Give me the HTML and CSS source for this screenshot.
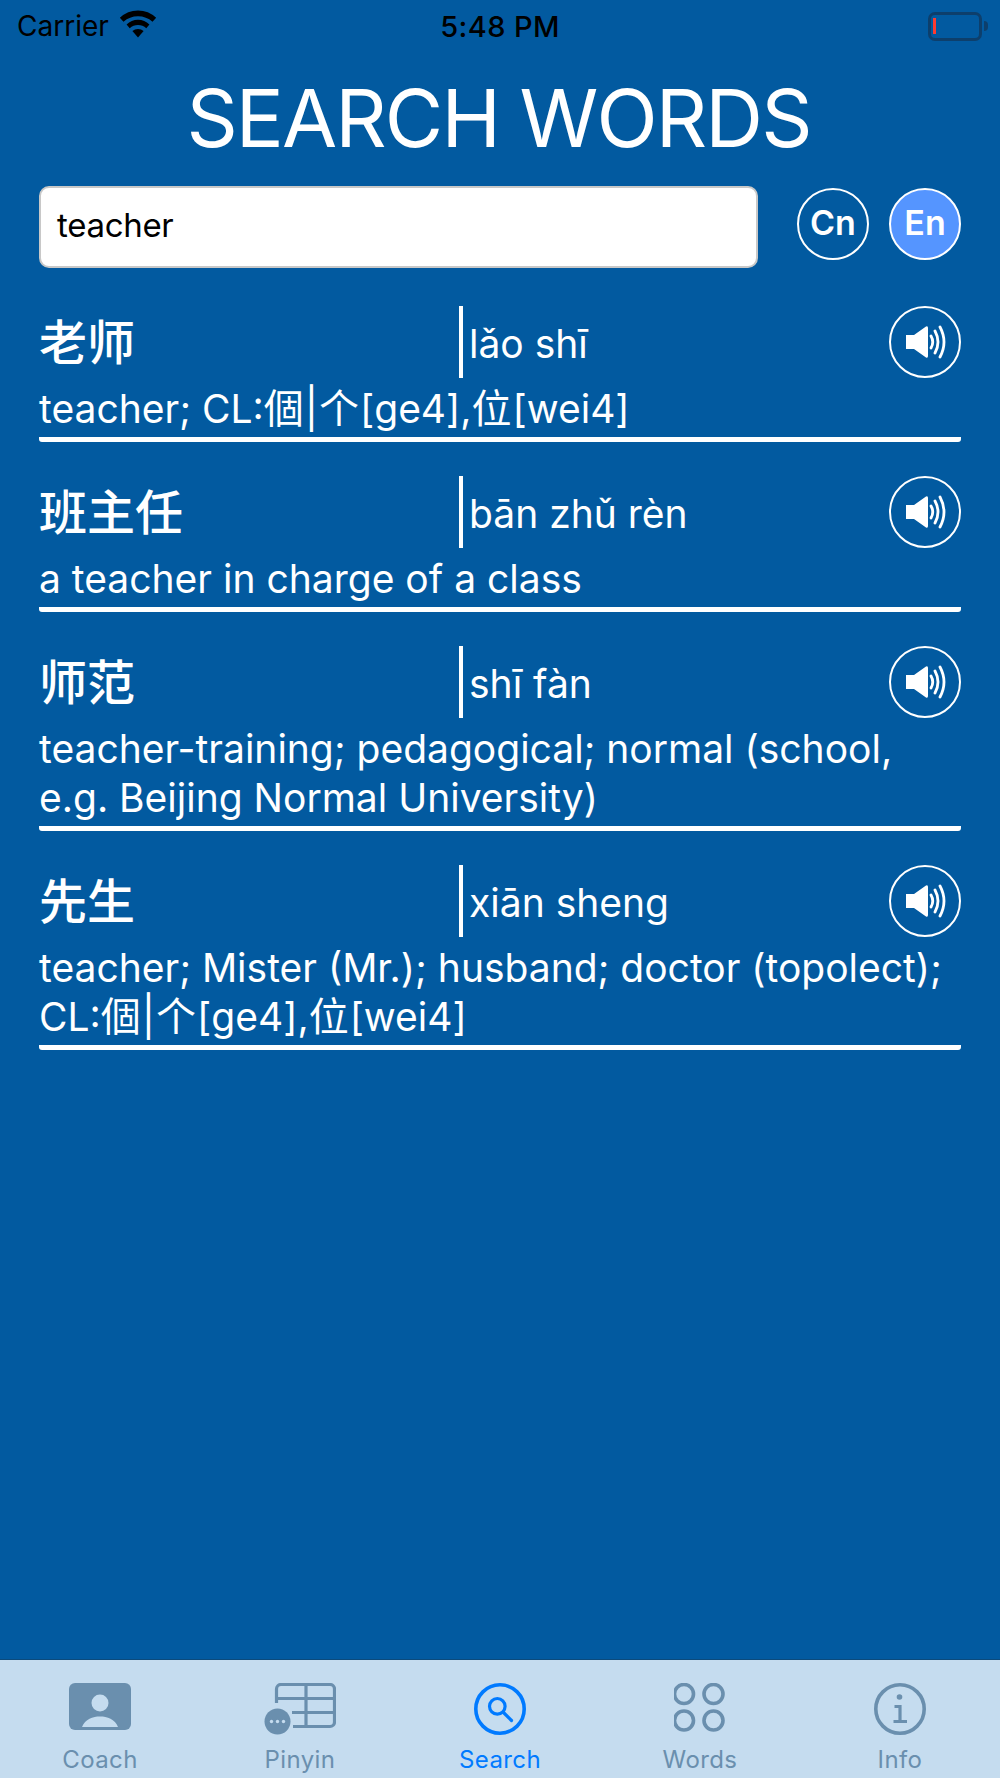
FILE: index.html
```html
<!doctype html>
<html>
<head>
    <title>Search Words</title>
    <meta charset="utf-8">
    <link rel="stylesheet" href="styles.css">
</head>
<body>
    <div id="page">
        <div class="status">
            <div class="status-left">
                <span>Carrier</span>
                <svg class="wifi" width="38" height="28" viewBox="0 0 36 27">
                    <path d="M18 26.500 L12.600 20.300 A8 8 0 0 1 23.400 20.300 Z"/>
                    <path d="M18 9.500 A16 16 0 0 1 29 14 L26 17.600 A12 12 0 0 0 10 17.600 L7 14 A16 16 0 0 1 18 9.500 Z"/>
                    <path d="M18 0.500 A26 26 0 0 1 35.500 7.500 L32 11.300 A21 21 0 0 0 4 11.300 L0.500 7.500 A26 26 0 0 1 18 0.500 Z"/>
                </svg>
            </div>
            <div class="status-time">5:48 PM</div>
            <div class="status-right">
                <div class="battery"><div class="battery-level"></div></div>
                <div class="battery-tip"></div>
            </div>
        </div>

        <h1 class="title">SEARCH WORDS</h1>

        <div class="search">
            <div class="search-input">teacher</div>
            <div class="lang-btn">Cn</div>
            <div class="lang-btn active">En</div>
        </div>

        <div class="results">
            <div class="word">
                <div class="word-head">
                    <div class="hanzi">老师</div>
                    <div class="pinyin">lǎo shī</div>
                    <div class="sound">
                        <svg width="44" height="46" viewBox="0 0 44 46"><use href="#speaker"/></svg>
                    </div>
                </div>
                <div class="meaning">teacher; CL:<span class="cn">個|个</span>[ge4],<span class="cn">位</span>[wei4]</div>
            </div>
            <div class="word">
                <div class="word-head">
                    <div class="hanzi">班主任</div>
                    <div class="pinyin">bān zhǔ rèn</div>
                    <div class="sound">
                        <svg width="44" height="46" viewBox="0 0 44 46"><use href="#speaker"/></svg>
                    </div>
                </div>
                <div class="meaning">a teacher in charge of a class</div>
            </div>
            <div class="word">
                <div class="word-head">
                    <div class="hanzi">师范</div>
                    <div class="pinyin">shī fàn</div>
                    <div class="sound">
                        <svg width="44" height="46" viewBox="0 0 44 46"><use href="#speaker"/></svg>
                    </div>
                </div>
                <div class="meaning">teacher-training; pedagogical; normal (school, e.g. Beijing Normal University)</div>
            </div>
            <div class="word">
                <div class="word-head">
                    <div class="hanzi">先生</div>
                    <div class="pinyin">xiān sheng</div>
                    <div class="sound">
                        <svg width="44" height="46" viewBox="0 0 44 46"><use href="#speaker"/></svg>
                    </div>
                </div>
                <div class="meaning">teacher; Mister (Mr.); husband; doctor (topolect);<br>CL:<span class="cn">個|个</span>[ge4],<span class="cn">位</span>[wei4]</div>
            </div>
        </div>

        <div class="tabs">
            <div class="tab">
                <svg width="62" height="52" viewBox="0 0 62 52">
                    <path d="M6 0 H56 A6 6 0 0 1 62 6 V41 A6 6 0 0 1 56 47 H6 A6 6 0 0 1 0 41 V6 A6 6 0 0 1 6 0 Z"/>
                    <circle cx="31" cy="20" r="8.500" class="cut"/>
                    <path d="M13 44 C16 36 24 33.500 31 33.500 C38 33.500 46 36 49 44 Z" class="cut"/>
                </svg>
                <span>Coach</span>
            </div>
            <div class="tab">
                <svg width="72" height="52" viewBox="0 0 72 52">
                    <path d="M12.500 20 V6 A4.500 4.500 0 0 1 17 1.500 H66 A4.500 4.500 0 0 1 70.500 6 V39 A4.500 4.500 0 0 1 66 43.500 H29 M12.500 15.500 H70 M28 29.500 H70 M42 2 V43" class="line thin"/>
                    <circle cx="13.500" cy="38.500" r="13"/>
                    <circle cx="7.500" cy="38.500" r="1.700" class="cut"/>
                    <circle cx="13.500" cy="38.500" r="1.700" class="cut"/>
                    <circle cx="19.500" cy="38.500" r="1.700" class="cut"/>
                </svg>
                <span>Pinyin</span>
            </div>
            <div class="tab selected">
                <svg width="52" height="52" viewBox="0 0 52 52">
                    <circle cx="26" cy="26" r="24.200" class="line"/>
                    <circle cx="23.300" cy="23.300" r="7.800" class="line thin"/>
                    <path d="M29.500 29.500 L37.500 37.500" class="line thin round"/>
                </svg>
                <span>Search</span>
            </div>
            <div class="tab">
                <svg width="52" height="52" viewBox="0 0 52 52">
                    <circle cx="10" cy="11" r="9.500" class="line"/>
                    <circle cx="39.500" cy="11" r="9.500" class="line"/>
                    <circle cx="10" cy="37.500" r="9.500" class="line"/>
                    <circle cx="39.500" cy="37.500" r="9.500" class="line"/>
                </svg>
                <span>Words</span>
            </div>
            <div class="tab">
                <svg width="52" height="52" viewBox="0 0 52 52">
                    <circle cx="26" cy="26" r="24.200" class="line"/>
                    <circle cx="25.500" cy="14" r="2.800"/>
                    <path d="M20.500 23.500 H26 V38 M19.500 38.500 H33" class="line thin"/>
                </svg>
                <span>Info</span>
            </div>
        </div>
    </div>

    <svg width="0" height="0" class="defs">
        <defs>
            <g id="speaker">
                <path d="M3 16 H11 L23 7.500 Q25 6.500 25 9 V37 Q25 39.500 23 38.500 L11 30 H3 Z" fill="#fff"/>
                <path d="M28 17 Q31.500 23 28 29 M32 12 Q38 23 32 34 M37 8 Q45 23 37 38" fill="none" stroke="#fff" stroke-width="2.800" stroke-linecap="round"/>
            </g>
        </defs>
    </svg>
</body>
</html>
```

FILE: styles.css
```css
html, body {
    margin: 0;
    height: 100%;
}

body {
    overflow: hidden;
    font-family: Inter, "Noto Sans CJK SC", sans-serif;
    color: white;
}

.defs {
    position: absolute;
}

#page {
    display: flex;
    flex-direction: column;
    height: 1778px;
    background-color: #025aa0;
}

/* status bar */
.status {
    display: grid;
    grid-template-columns: 1fr auto 1fr;
    align-items: center;
    height: 52px;
    padding: 0 17px;
    color: black;
    font-size: 28px;
}

.status-left {
    display: flex;
    align-items: center;
    gap: 10px;
}

.wifi {
    margin-top: -5px;
}

.status-time {
    font-size: 29px;
    font-weight: 500;
    letter-spacing: 0.400px;
}

.status-right {
    display: flex;
    align-items: center;
    justify-content: flex-end;
    gap: 2px;
    margin-right: -5px;
}

.battery {
    display: flex;
    align-items: center;
    box-sizing: border-box;
    width: 54px;
    height: 29px;
    padding: 0 2px;
    border: 3px solid #0d3f6c;
    border-radius: 7px;
}

.battery-level {
    width: 3px;
    height: 16px;
    background-color: #ff3b30;
}

.battery-tip {
    width: 4px;
    height: 10px;
    background-color: #0d3f6c;
    border-radius: 0 4px 4px 0;
}

.title {
    margin: 0;
    padding: 20px 3px 0 0;
    font-size: 80px;
    font-weight: 400;
    letter-spacing: -1.900px;
    line-height: 92px;
    text-align: center;
}

/* search row */
.search {
    display: flex;
    align-items: flex-start;
    margin-top: 22px;
    padding: 0 39px;
}

.search-input {
    box-sizing: border-box;
    width: 719px;
    height: 82px;
    margin-right: 39px;
    padding-left: 16px;
    background-color: white;
    border: 2px solid #c8c8c8;
    border-radius: 10px;
    color: black;
    font-size: 33px;
    letter-spacing: -0.300px;
    line-height: 74px;
}

.lang-btn {
    box-sizing: border-box;
    width: 72px;
    height: 72px;
    margin-top: 2px;
    border: 2px solid white;
    border-radius: 50%;
    font-size: 34px;
    font-weight: 600;
    line-height: 66px;
    text-align: center;
}

.lang-btn.active {
    margin-left: 20px;
    background-color: #5595ff;
}

/* results */
.results {
    flex: 1;
    display: flex;
    flex-direction: column;
    gap: 34px;
    margin-top: 38px;
    padding: 0 39px;
}

.word {
    border-bottom: 5px solid white;
    border-radius: 0 0 3px 3px;
}

.word-head {
    display: flex;
    align-items: center;
    height: 72px;
}

.hanzi {
    width: 420px;
    padding-bottom: 6px;
    font-size: 48px;
    font-weight: 500;
}

.pinyin {
    flex: 1;
    height: 72px;
    padding-left: 6px;
    border-left: 4px solid white;
    font-size: 39px;
    line-height: 75px;
}

.sound {
    display: flex;
    align-items: center;
    justify-content: center;
    box-sizing: border-box;
    width: 72px;
    height: 72px;
    border: 2px solid white;
    border-radius: 50%;
}

.meaning {
    padding: 6px 0 4px;
    font-size: 39px;
    line-height: 49px;
}

.cn {
    font-size: 40px;
    letter-spacing: 1px;
    line-height: 1;
}

/* tab bar */
.tabs {
    display: grid;
    grid-template-columns: repeat(5, 1fr);
    height: 119px;
    box-sizing: border-box;
    padding-top: 23px;
    background-color: #c5dcef;
    border-top: 1px solid #0b4a7c;
    color: #6a8fae;
}

.tab {
    display: flex;
    flex-direction: column;
    align-items: center;
    font-size: 24px;
    letter-spacing: 0.400px;
    line-height: 30px;
}

.tab svg {
    fill: currentColor;
    margin-bottom: 10px;
}

.tab .cut {
    fill: #c5dcef;
}

.tab .line {
    fill: none;
    stroke: currentColor;
    stroke-width: 3.600;
}

.tab .thin {
    stroke-width: 3.200;
}

.tab .round {
    stroke-linecap: round;
}

.tab.selected {
    color: #007aff;
}
```
